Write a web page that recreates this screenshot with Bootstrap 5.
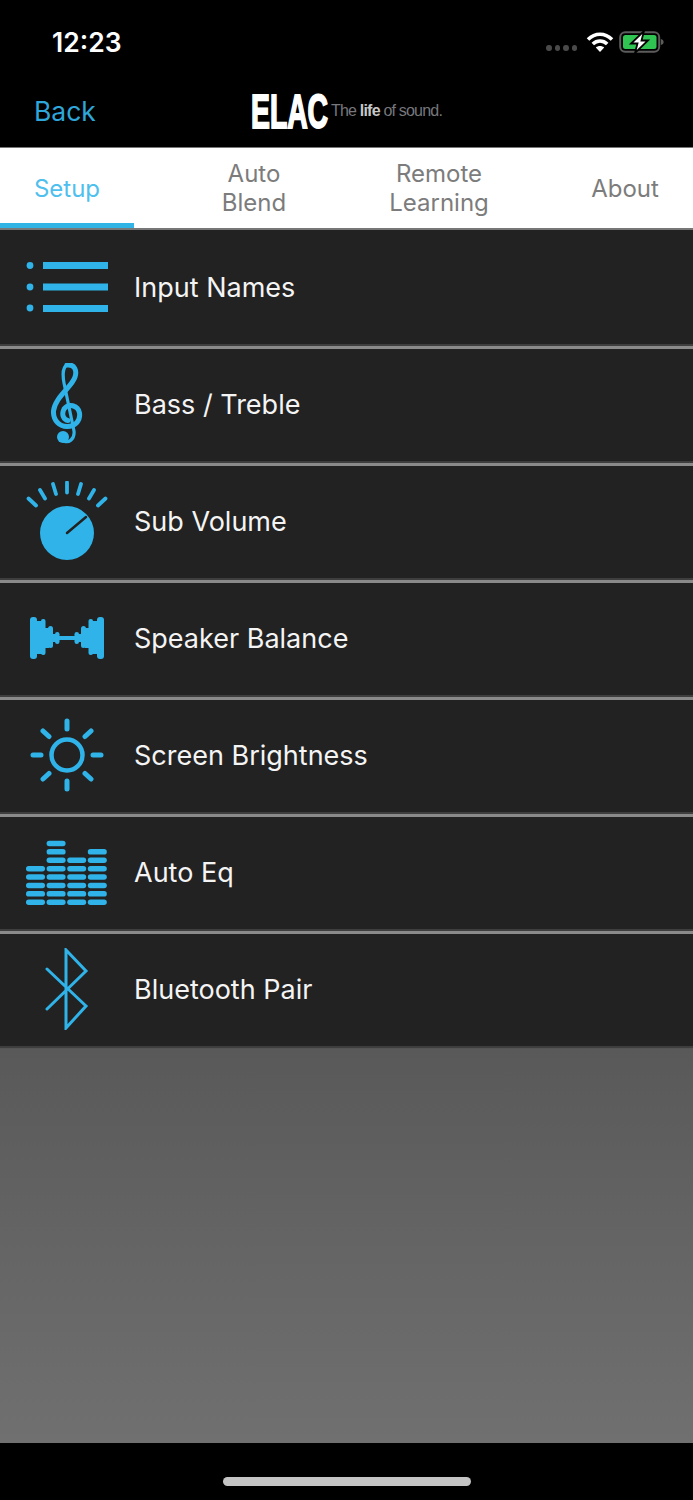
<!DOCTYPE html>
<html lang="en">
<head>
<meta charset="UTF-8">
<title>ELAC Setup</title>
<link href="https://cdn.jsdelivr.net/npm/bootstrap@5.3.3/dist/css/bootstrap.min.css" rel="stylesheet">
<style>
 html,body{height:1500px;overflow:hidden}
 body{background:#000;font-family:"Inter","Liberation Sans",sans-serif}
 .app-shell{width:693px;height:1500px}
 .status-bar{height:74px;padding:0 28px 0 52px}
 .status-time{color:#fff;font-size:26.5px;font-weight:600;line-height:1;margin-top:11px}
 .status-icons{gap:5px;margin-top:10px}
 .cell-dots{gap:3px;margin-top:12px;margin-right:4px}
 .cell-dots i{width:5.5px;height:6px;border-radius:50%;background:#4a4a4a;display:block}
 .top-bar{height:73px;padding-left:34px}
 .back-link{color:#2fa6d9;font-size:26.5px;line-height:1;text-decoration:none;padding-top:2px}
 .brand-wrap{left:250px;top:0}
 .brand-mark{font-family:"Liberation Sans",sans-serif;font-weight:700;font-size:48px;fill:#fff;stroke:#fff;stroke-width:2px}
 .brand-tag{font-family:"Liberation Sans",sans-serif;font-size:16px;letter-spacing:-.8px;fill:#77777c}
 .brand-tag tspan{font-weight:700;fill:#c8c8c8}
 .tab-strip{height:83px;background:#fff;border-top:1px solid #777;border-bottom:2px solid #777}
 .tab-item{flex:none;color:#7c7c7c;font-size:24px;line-height:29px;text-align:center}
 .tab-item.is-on{color:#4fc0ee;border-bottom:5px solid #30b4e6;padding-top:5px}
 .tab-setup{width:134px}.tab-blend{width:240px}.tab-remote{width:130px}.tab-about{width:189px;padding-left:53px}
 .menu-row{height:117px;background:#222;border-top:3px solid #8a8a8a;border-bottom:2px solid #3e3e3e;padding-bottom:2px}
 .menu-row:first-child{border-top:none;height:116px;padding-bottom:0}
 .row-icon{width:134px;flex:none}
 .row-text{color:#f4f4f4;font-size:27px;line-height:1}
 .lower-fill{height:395px;background:linear-gradient(#595959,#707070);border-top:1px solid #555}
 .home-zone{height:57px;padding-top:34px}
 .home-pill{width:248px;height:9px;border-radius:5px;background:#c4c4c4}
</style>
</head>
<body>
<div class="app-shell d-flex flex-column">

  <div class="status-bar d-flex justify-content-between align-items-center">
    <div class="status-time">12:23</div>
    <div class="status-icons d-flex align-items-center">
      <div class="cell-dots d-flex"><i></i><i></i><i></i><i></i></div>
      <svg width="28" height="22" viewBox="0 0 28 22"><g fill="none" stroke="#fff" stroke-width="3.6"><path d="M2 8.5C9 1.5 19 1.5 26 8.5"/><path d="M6.8 13C11 9 17 9 21.2 13"/></g><path d="M14 21l-4.2-4.6c2.4-2 6-2 8.4 0z" fill="#fff"/></svg>
      <svg width="46" height="22" viewBox="0 0 46 22"><rect x="1.2" y="1.2" width="39" height="19.6" rx="5" fill="none" stroke="#5c5c5c" stroke-width="2"/><rect x="4" y="4" width="33.5" height="14" rx="2.5" fill="#30c552"/><path d="M41.8 8v6c1.8-.4 2.8-1.5 2.8-3s-1-2.600-2.800-3z" fill="#5c5c5c"/><path d="M25 0L12 12.500h6.500L16 22 29 9.500H22.500z" fill="#fff" stroke="#000" stroke-width="1.800"/></svg>
    </div>
  </div>

  <div class="top-bar d-flex align-items-center position-relative">
    <a class="back-link" href="#">Back</a>
    <svg class="brand-wrap position-absolute" width="200" height="73" viewBox="0 0 200 73">
      <text class="brand-mark" transform="translate(1 54) scale(.59 1)">ELAC</text>
      <text class="brand-tag" x="81" y="42">The <tspan>life</tspan> of sound.</text>
    </svg>
  </div>

  <div class="tab-strip d-flex align-items-stretch">
    <div class="tab-item tab-setup is-on d-flex align-items-center justify-content-center">Setup</div>
    <div class="tab-item tab-blend d-flex align-items-center justify-content-center">Auto<br>Blend</div>
    <div class="tab-item tab-remote d-flex align-items-center justify-content-center">Remote<br>Learning</div>
    <div class="tab-item tab-about d-flex align-items-center justify-content-center">About</div>
  </div>

  <div class="menu-list">
    <div class="menu-row d-flex align-items-center">
      <div class="row-icon d-flex justify-content-center">
        <svg width="82" height="50" viewBox="0 0 82 50" fill="#2fb3e8"><circle cx="4" cy="3.500" r="3.400"/><circle cx="4" cy="25" r="3.400"/><circle cx="4" cy="46" r="3.400"/><rect x="17" y="0" width="65" height="7"/><rect x="17" y="21.500" width="65" height="7"/><rect x="17" y="43" width="65" height="7"/></svg>
      </div>
      <div class="row-text">Input Names</div>
    </div>
    <div class="menu-row d-flex align-items-center">
      <div class="row-icon d-flex justify-content-center">
        <svg width="32" height="82" viewBox="0 0 32 82" fill="none" stroke="#2fb3e8" stroke-linecap="round"><path d="M16 2C24 1 26 8 24 14 21 24 4 34 2.500 48 2 58 9 63.500 16 63.500 25 63.500 29.500 57 28.500 50 27 42 17 40 13 46 10 52 13 57 17 57.500" stroke-width="5"/><path d="M16 2C12 4 11.500 12 13 20L23 68C24 77 17 80 13 78" stroke-width="3.200"/><circle cx="12" cy="74" r="6" fill="#2fb3e8" stroke="none"/></svg>
      </div>
      <div class="row-text">Bass / Treble</div>
    </div>
    <div class="menu-row d-flex align-items-center">
      <div class="row-icon d-flex justify-content-center">
        <svg width="82" height="80" viewBox="0 0 82 80"><g stroke="#2fb3e8" stroke-width="3.800" stroke-linecap="round"><path d="M2.500 17.500L10 24.500M14 9L19 17.500M27 3L30 13M41 1.500V11.500M55 3L52 13M68 9L63 17.500M79.500 17.500L72 24.500"/></g><circle cx="41" cy="52" r="27" fill="#2fb3e8"/><path d="M41 52L60 36" stroke="#222" stroke-width="2.500" stroke-linecap="round"/></svg>
      </div>
      <div class="row-text">Sub Volume</div>
    </div>
    <div class="menu-row d-flex align-items-center">
      <div class="row-icon d-flex justify-content-center">
        <svg width="74" height="42" viewBox="0 0 74 42" fill="#2fb3e8"><g id="halfWave"><rect x="0" y="0" width="7" height="42" rx="3"/><rect x="6" y="4" width="6" height="33"/><rect x="11" y="2" width="4.500" height="36" rx="2"/><rect x="15" y="11" width="4" height="20"/><rect x="18" y="9" width="5" height="22" rx="2.500"/><rect x="22" y="17" width="4" height="8"/><rect x="25" y="15" width="4.500" height="12" rx="2.200"/><rect x="29" y="19" width="8" height="4"/></g><use href="#halfWave" transform="matrix(-1 0 0 1 74 0)"/></svg>
      </div>
      <div class="row-text">Speaker Balance</div>
    </div>
    <div class="menu-row d-flex align-items-center">
      <div class="row-icon d-flex justify-content-center">
        <svg width="74" height="74" viewBox="0 0 74 74" fill="none" stroke="#2fb3e8" stroke-linecap="round"><circle cx="37" cy="37" r="15.500" stroke-width="4.500"/><g stroke-width="5"><path d="M37 3V11M37 63V71M3 37H11M63 37H71M13 13L19 18.500M61 13L55 18.500M13 61L19 55.500M61 61L55 55.500"/></g></svg>
      </div>
      <div class="row-text">Screen Brightness</div>
    </div>
    <div class="menu-row d-flex align-items-center">
      <div class="row-icon d-flex justify-content-center" id="eqCell"></div>
      <div class="row-text">Auto Eq</div>
    </div>
    <div class="menu-row d-flex align-items-center">
      <div class="row-icon d-flex justify-content-center">
        <svg width="44" height="82" viewBox="0 0 44 82" fill="none" stroke="#2fb3e8" stroke-width="3" stroke-linecap="round"><path d="M2 21L41 58 21 80V2L41 23 2 61"/></svg>
      </div>
      <div class="row-text">Bluetooth Pair</div>
    </div>
  </div>

  <div class="lower-fill"></div>
  <div class="home-zone d-flex justify-content-center"><div class="home-pill"></div></div>
</div>
<script src="https://cdn.jsdelivr.net/npm/bootstrap@5.3.3/dist/js/bootstrap.bundle.min.js"></script>
<script>
/* eq bars, heights per column */
const cols=[5,8,6,7];
let bars='';
cols.forEach((n,c)=>{
  for(let i=0;i<n;i++){
    bars+=`<rect x="${c*20.6}" y="${59.5-i*8.4}" width="19" height="5.5" rx="2.7"/>`;
  }
});
document.getElementById('eqCell').innerHTML=`<svg width="82" height="65" viewBox="0 0 82 65" fill="#2fb3e8">${bars}</svg>`;
</script>
</body>
</html>
